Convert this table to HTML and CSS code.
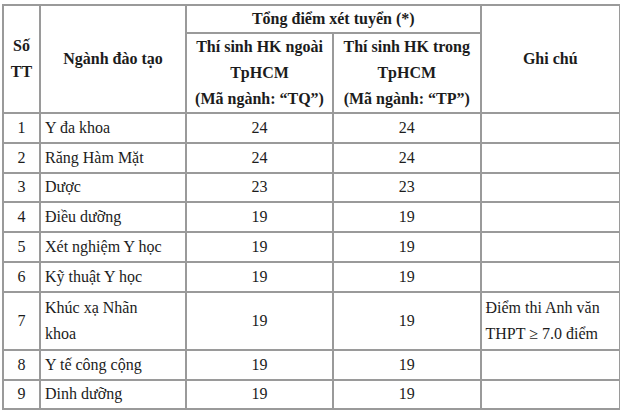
FILE: index.html
```html
<!DOCTYPE html>
<html lang="vi">
<head>
<meta charset="utf-8">
<link rel="stylesheet" href="styles.css">
</head>
<body>
<table class="grid">
  <colgroup>
    <col class="c-stt">
    <col class="c-name">
    <col class="c-tq">
    <col class="c-tp">
    <col class="c-note">
  </colgroup>
  <thead>
    <tr class="h1">
      <th rowspan="2">Số<br>TT</th>
      <th rowspan="2">Ngành đào tạo</th>
      <th colspan="2">Tổng điểm xét tuyển (*)</th>
      <th rowspan="2">Ghi chú</th>
    </tr>
    <tr class="h2">
      <th>Thí sinh HK ngoài<br>TpHCM<br>(Mã ngành: “TQ”)</th>
      <th>Thí sinh HK trong<br>TpHCM<br>(Mã ngành: “TP”)</th>
    </tr>
  </thead>
  <tbody>
    <tr class="r"><td class="num">1</td><td class="name">Y đa khoa</td><td class="num">24</td><td class="num">24</td><td class="note"></td></tr>
    <tr class="r"><td class="num">2</td><td class="name">Răng Hàm Mặt</td><td class="num">24</td><td class="num">24</td><td class="note"></td></tr>
    <tr class="r"><td class="num">3</td><td class="name">Dược</td><td class="num">23</td><td class="num">23</td><td class="note"></td></tr>
    <tr class="r"><td class="num">4</td><td class="name">Điều dưỡng</td><td class="num">19</td><td class="num">19</td><td class="note"></td></tr>
    <tr class="r"><td class="num">5</td><td class="name">Xét nghiệm Y học</td><td class="num">19</td><td class="num">19</td><td class="note"></td></tr>
    <tr class="r"><td class="num">6</td><td class="name">Kỹ thuật Y học</td><td class="num">19</td><td class="num">19</td><td class="note"></td></tr>
    <tr class="r2"><td class="num">7</td><td class="name">Khúc xạ Nhãn<br>khoa</td><td class="num">19</td><td class="num">19</td><td class="note">Điểm thi Anh văn<br>THPT ≥ 7.0 điểm</td></tr>
    <tr class="r"><td class="num">8</td><td class="name">Y tế công cộng</td><td class="num">19</td><td class="num">19</td><td class="note"></td></tr>
    <tr class="r last"><td class="num">9</td><td class="name">Dinh dưỡng</td><td class="num">19</td><td class="num">19</td><td class="note"></td></tr>
  </tbody>
</table>
</body>
</html>
```
FILE: styles.css
```css
html, body {
  margin: 0;
  padding: 0;
  background: #ffffff;
}
body {
  padding: 3.5px 0 0 2px;
  font-family: "Liberation Serif", "Times New Roman", serif;
  font-size: 16px;
  line-height: 26px;
  color: #1c1c1c;
}
.grid {
  border-collapse: collapse;
  table-layout: fixed;
  width: 617px;
}
.grid th, .grid td {
  border: 2px solid #9a9a9a;
  padding: 0 4px;
  vertical-align: middle;
  overflow: hidden;
}
.grid th {
  font-weight: bold;
  text-align: center;
}
.c-stt { width: 37px; }
.c-name { width: 146px; }
.c-tq { width: 147px; }
.c-tp { width: 147.5px; }
.c-note { width: 139.5px; }
.h1 { height: 28px; }
.h2 { height: 80.5px; }
.r { height: 29.8px; }
.r2 { height: 58px; }
.last { height: 29px; }
.num { text-align: center; }
.name { text-align: left; }
.note { text-align: left; padding-left: 6px; }
```
